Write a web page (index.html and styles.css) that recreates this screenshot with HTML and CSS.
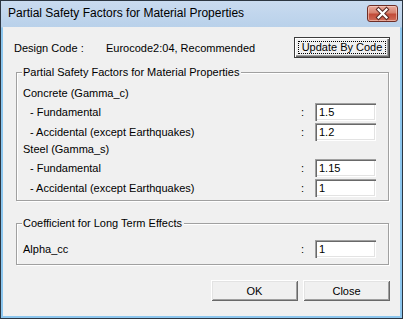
FILE: index.html
```html
<!DOCTYPE html>
<html lang="en">
<head>
  <meta charset="UTF-8">
  <title>Partial Safety Factors for Material Properties</title>
  <link rel="stylesheet" href="styles.css">
</head>
<body>

<div class="window">
  <div class="titlebar">
    <span class="title">Partial Safety Factors for Material Properties</span>
    <button class="close-btn" aria-label="Close">
      <svg width="31" height="17" viewBox="0 0 31 17">
        <path d="M11.5 4.5 L19.5 12.5 M19.5 4.5 L11.5 12.5" stroke="#5a2a24" stroke-width="4.2" stroke-linecap="square"/>
        <path d="M11.5 4.5 L19.5 12.5 M19.5 4.5 L11.5 12.5" stroke="#fff" stroke-width="2.2" stroke-linecap="square"/>
      </svg>
    </button>
  </div>

  <div class="client">
    <div class="design-row">
      <span class="design-label">Design Code :</span>
      <span class="design-value">Eurocode2:04, Recommended</span>
      <button class="btn btn-default"><span class="focus">Update By Code</span></button>
    </div>

    <fieldset class="group">
      <legend>Partial Safety Factors for Material Properties</legend>
      <div class="heading">Concrete (Gamma_c)</div>
      <div class="row">
        <span class="label sub">- Fundamental</span>
        <span class="colon">:</span>
        <input class="field" value="1.5">
      </div>
      <div class="row">
        <span class="label sub">- Accidental (except Earthquakes)</span>
        <span class="colon">:</span>
        <input class="field" value="1.2">
      </div>
      <div class="heading">Steel (Gamma_s)</div>
      <div class="row">
        <span class="label sub">- Fundamental</span>
        <span class="colon">:</span>
        <input class="field" value="1.15">
      </div>
      <div class="row">
        <span class="label sub">- Accidental (except Earthquakes)</span>
        <span class="colon">:</span>
        <input class="field" value="1">
      </div>
    </fieldset>

    <fieldset class="group group-long">
      <legend>Coefficient for Long Term Effects</legend>
      <div class="row">
        <span class="label">Alpha_cc</span>
        <span class="colon">:</span>
        <input class="field" value="1">
      </div>
    </fieldset>

    <div class="actions">
      <button class="btn">OK</button>
      <button class="btn">Close</button>
    </div>
  </div>
</div>

</body>
</html>
```

FILE: styles.css
```css
body { margin: 0; font-family: "Liberation Sans", Arial, sans-serif; font-size: 11px; color: #000; }

.window { width: 403px; height: 319px; box-sizing: border-box; border: 1px solid #2c3642; padding: 0 2px 2px; display: flex; flex-direction: column; background: linear-gradient(#c9dbf0, #b9d1ea 26px, #8cc6ee 27px); }
.titlebar { height: 26px; display: flex; align-items: flex-start; padding-left: 5px; }
.title { font-size: 12px; line-height: 26px; margin-top: -1px; }
.close-btn { margin: 4px 2px 0 auto; width: 31px; height: 17px; padding: 0; border: 1px solid #6e2e26; border-radius: 3px; background: linear-gradient(#e9aa9c, #d7826f 45%, #c24b38 55%, #cf6c58); box-shadow: inset 0 0 0 1px rgba(255, 220, 210, 0.55); display: flex; }
.close-btn svg { margin: -1px; }

.client { flex: 1; background: #f0f0f0; padding: 10px 10px 0 11px; }

.design-row { display: flex; align-items: center; height: 21px; }
.design-label { width: 92px; }
.btn { font: inherit; color: #000; background: #f0f0f0; border: none; height: 21px; padding: 0; box-shadow: inset 1px 1px #fff, inset -1px -1px #696969, inset 2px 2px #e3e3e3, inset -2px -2px #a0a0a0; }
.btn-default { margin-left: auto; width: 96px; border: 1px solid #3c3c3c; box-shadow: inset 1px 1px #fff, inset -1px -1px #696969, inset -2px -2px #a0a0a0; padding: 3px; display: flex; }
.focus { flex: 1; border: 1px dotted #000; line-height: 11px; }

.group { margin: 8px 1px 0 2px; padding: 7px 12px 2px 6px; border: 1px solid #a0a0a0; box-shadow: inset 1px 1px #fff, 1px 1px #fff; }
.group legend { margin-left: -1px; padding: 0 2px 0 1px; line-height: 13px; background: #f0f0f0; }
.group-long { margin-top: 16px; padding-top: 9px; padding-bottom: 5px; }

.heading { height: 16px; line-height: 15px; }
.row { display: flex; align-items: center; height: 20px; }
.label { flex: 1; }
.sub { padding-left: 7px; }
.colon { width: 14px; }
.field { width: 61px; height: 18px; box-sizing: border-box; margin: 0; padding: 0 4px; border: none; font: inherit; background: #fff; box-shadow: inset 1px 1px #a0a0a0, inset 2px 2px #696969, inset -1px -1px #fff, inset -2px -2px #e3e3e3; }

.actions { display: flex; justify-content: flex-end; gap: 5px; margin: 15px 0 0; }
.actions .btn { width: 87px; }
```
